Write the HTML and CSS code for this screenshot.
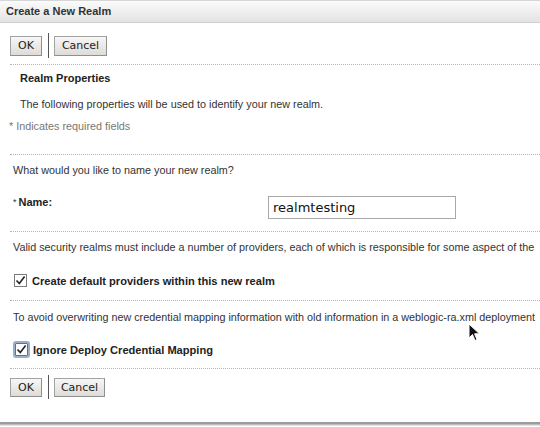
FILE: index.html
```html
<!DOCTYPE html>
<html>
<head>
<meta charset="utf-8">
<link rel="stylesheet" href="styles.css">
</head>
<body>
<div class="dialog">
  <div class="titlebar">Create a New Realm</div>
  <div class="toolbar toolbar-top">
    <button class="btn">OK</button>
    <span class="sep"></span>
    <button class="btn">Cancel</button>
  </div>
  <div class="dots"></div>
  <div class="section-title">Realm Properties</div>
  <div class="intro">The following properties will be used to identify your new realm.</div>
  <div class="required">* Indicates required fields</div>
  <div class="dots dots-gap1"></div>
  <div class="text q-name">What would you like to name your new realm?</div>
  <div class="field-row">
    <label class="field-label"><span class="star">*</span>Name:</label>
    <div class="input">realmtesting</div>
  </div>
  <div class="dots dots-gap2"></div>
  <div class="text t-valid">Valid security realms must include a number of providers, each of which is responsible for some aspect of the</div>
  <div class="check-row c1">
    <span class="checkbox"><svg width="11" height="11" viewBox="0 0 11 11"><path d="M1.5 5.5 L4.3 8.6 L9.6 1.6" fill="none" stroke="#222" stroke-width="1.6"/></svg></span>
    <span class="check-label">Create default providers within this new realm</span>
  </div>
  <div class="dots dots-gap3"></div>
  <div class="text t-avoid">To avoid overwriting new credential mapping information with old information in a weblogic-ra.xml deployment</div>
  <div class="check-row c2">
    <span class="checkbox focus"><svg width="11" height="11" viewBox="0 0 11 11"><path d="M1.5 5.5 L4.3 8.6 L9.6 1.6" fill="none" stroke="#222" stroke-width="1.6"/></svg></span>
    <span class="check-label">Ignore Deploy Credential Mapping</span>
  </div>
  <div class="dots dots-gap4"></div>
  <div class="toolbar toolbar-bottom">
    <button class="btn">OK</button>
    <span class="sep"></span>
    <button class="btn btn-narrow">Cancel</button>
  </div>
</div>
<svg class="cursor" width="14" height="20" viewBox="0 0 14 20"><path d="M1 1 L1 15 L4.5 11.5 L7 17.5 L9 16.6 L6.6 10.8 L11.5 10.8 Z" fill="#111" stroke="#fff" stroke-width="1"/></svg>
</body>
</html>
```

FILE: styles.css
```css
html, body {
  margin: 0;
  padding: 0;
  background: #fff;
}
body {
  width: 540px;
  height: 427px;
  overflow: hidden;
  position: relative;
  font-family: "Liberation Sans", Arial, sans-serif;
  font-size: 10.8px;
  color: #333;
  white-space: nowrap;
}
.dialog {
  height: 424px;
  box-sizing: border-box;
  border-bottom: 2px solid #9c9c9c;
  box-shadow: 0 1px 0 #bdbdbd, 0 2px 0 #e2e2e2;
  overflow: hidden;
}
.titlebar {
  height: 23px;
  box-sizing: border-box;
  border-top: 1px solid #d6d6d6;
  border-bottom: 1px solid #cfcfcf;
  background: linear-gradient(#fbfbfb, #e3e3e3);
  font-weight: bold;
  font-size: 11px;
  line-height: 20px;
  color: #333;
  padding-left: 6px;
}
.toolbar {
  display: flex;
  align-items: center;
  padding-left: 10px;
  height: 25px;
}
.toolbar-top { margin-top: 10px; margin-bottom: 6px; }
.toolbar-bottom { margin-top: 7px; height: 24px; }
.btn {
  font-family: "DejaVu Sans", sans-serif;
  font-size: 11px;
  color: #222;
  height: 20px;
  padding: 0 7px;
  border: 1px solid #a3a3a3;
  border-right-color: #8f8f8f;
  border-bottom-color: #8f8f8f;
  border-radius: 0;
  background: linear-gradient(#f7f7f5, #dedcd8);
  line-height: 18px;
  margin: 0;
}
.toolbar-bottom .btn { height: 19px; line-height: 17px; }
.btn-narrow { padding: 0 6px; }
.sep {
  width: 1px;
  align-self: stretch;
  background: #555;
  margin: 0 5px 0 6px;
}
.dots {
  margin-left: 10px;
  border-top: 1px dotted #b4b4b4;
  height: 0;
}
.section-title {
  font-weight: bold;
  font-size: 11px;
  color: #222;
  padding-left: 20px;
  line-height: 14px;
  margin-top: 6px;
}
.intro {
  padding-left: 20px;
  line-height: 14px;
  margin-top: 12px;
}
.required {
  padding-left: 9px;
  line-height: 14px;
  margin-top: 8px;
  color: #777;
}
.dots-gap1 { margin-top: 21px; }
.text {
  padding-left: 13px;
  line-height: 14px;
}
.q-name { margin-top: 8px; }
.field-row {
  display: flex;
  align-items: flex-start;
  margin-top: 19px;
}
.field-label {
  width: 255px;
  padding-left: 13px;
  line-height: 14px;
  font-weight: bold;
  font-size: 11px;
  color: #222;
  margin-top: -1px;
}
.star {
  font-weight: normal;
  font-size: 9px;
  vertical-align: top;
  margin-right: 2px;
  color: #333;
}
.input {
  width: 188px;
  height: 23px;
  box-sizing: border-box;
  border: 1px solid #a8a8a8;
  font-family: "DejaVu Sans", sans-serif;
  font-size: 13px;
  line-height: 21px;
  padding-left: 4px;
  color: #111;
}
.dots-gap2 { margin-top: 12px; }
.t-valid { margin-top: 8px; }
.check-row {
  display: flex;
  align-items: center;
  height: 17px;
  padding-left: 14px;
}
.c1 { margin-top: 18px; }
.c2 { margin-top: 17px; padding-left: 13px; }
.checkbox {
  width: 13px;
  height: 13px;
  box-sizing: border-box;
  border: 1px solid #7a7a7a;
  background: #fff;
  display: flex;
  align-items: center;
  justify-content: center;
  margin-right: 5px;
}
.checkbox.focus {
  width: 17px;
  height: 17px;
  border: 2px solid #98b0cc;
  border-radius: 3px;
  box-shadow: inset 0 0 0 1px #6f6f6f;
  margin-right: 3px;
}
.check-label {
  font-weight: bold;
  font-size: 11.1px;
  color: #222;
  line-height: 14px;
}
.dots-gap3 { margin-top: 11px; }
.t-avoid { margin-top: 9px; }
.dots-gap4 { margin-top: 10px; }
.toolbar-bottom { margin-top: 6px; }
.cursor {
  position: absolute;
  left: 468px;
  top: 323px;
}
```
